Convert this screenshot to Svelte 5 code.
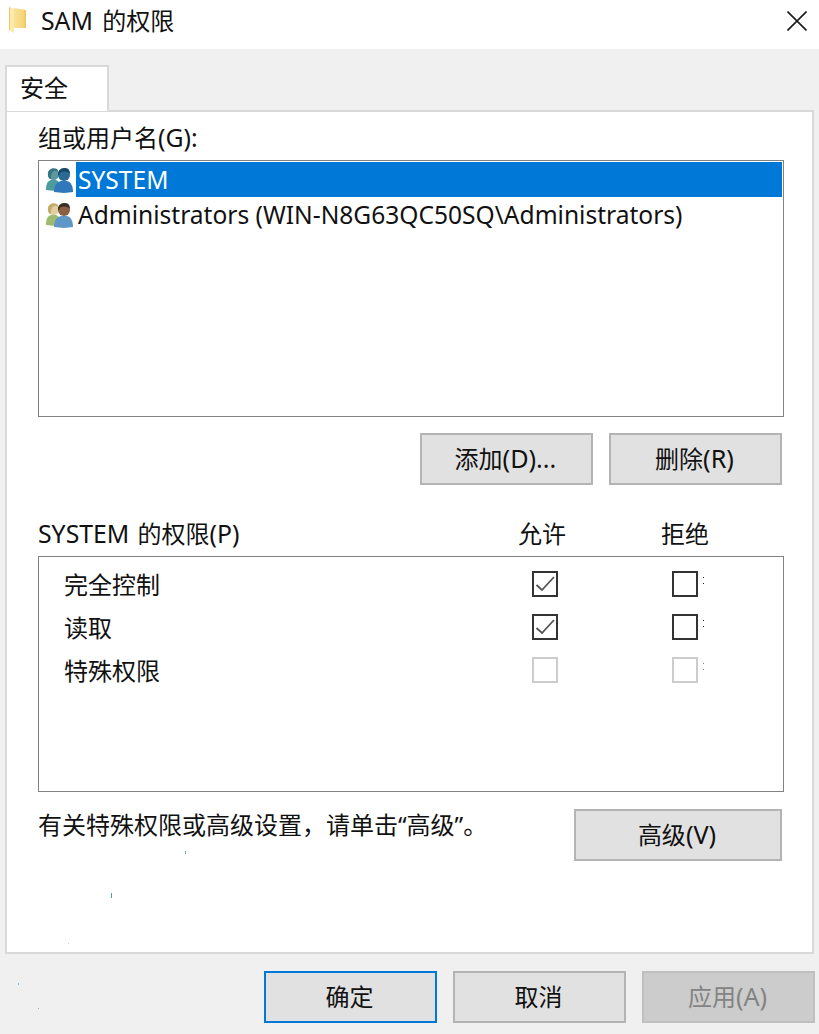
<script>
  const principals = [
    { name: 'SYSTEM', selected: true, left: '#4f9a9c', leftHead: '#5a9aa0', right: '#2f78bb', rightHead: '#2a6a94', hair: '#17466b', leftHair: '#3a7680' },
    { name: 'Administrators (WIN-N8G63QC50SQ\\Administrators)', selected: false, left: '#9dbb6e', leftHead: '#e2cfa0', right: '#5f97c8', rightHead: '#8a6044', hair: '#3a2c24', leftHair: '#c4ad6c' }
  ];

  const permissions = [
    { name: '完全控制', allow: true, disabled: false },
    { name: '读取', allow: true, disabled: false },
    { name: '特殊权限', allow: false, disabled: true }
  ];

  // stray compression specks in the capture
  const specks = [
    { x: 185, y: 851, h: 3, c: '#6f9fd0' },
    { x: 111, y: 893, h: 5, c: '#4f96d2' },
    { x: 68, y: 943, h: 1, c: '#c8d0d8' },
    { x: 18, y: 983, h: 2, c: '#6fc0e8' },
    { x: 38, y: 1008, h: 1, c: '#a8a8a8' }
  ];
</script>

<div class="dialog">
  <header class="titlebar">
    <svg class="folder" width="20" height="28" viewBox="0 0 20 28">
      <defs>
        <linearGradient id="fold" x1="0" y1="0" x2="1" y2="0">
          <stop offset="0" stop-color="#f9e196" />
          <stop offset="0.75" stop-color="#f7d67c" />
          <stop offset="1" stop-color="#eec25a" />
        </linearGradient>
      </defs>
      <path d="M6 2 L18 4 L18 22 L6 22 Z" fill="url(#fold)" />
      <path d="M1 1 L6 3 L6 27 L1 24 Z" fill="#fbe9ae" />
      <path d="M1 1 L2 1.4 L2 24.6 L1 24 Z" fill="#f0c862" />
    </svg>
    <span class="title"><span class="lat">SAM</span> 的权限</span>
    <svg class="close" width="20" height="20" viewBox="0 0 20 20">
      <path d="M0.5 0.5 L19.5 19.5 M19.5 0.5 L0.5 19.5" stroke="#1a1a1a" stroke-width="1.6" fill="none" />
    </svg>
  </header>

  <div class="body">
    <div class="tab">安全</div>

    <section class="panel">
      <div class="label">组或用户名<span class="lat">(G):</span></div>
      <ul class="list">
        {#each principals as p}
          <li class="row">
            <svg class="people" width="30" height="28" viewBox="0 0 30 28">
              <path d="M2 24 C2 17 4 15 7 14 L12 14 C15 15 17 18 17 24 L12 25 Z" fill={p.left} />
              <circle cx="9.5" cy="8.5" r="5.5" fill={p.leftHead} />
              <path d="M4 9 C3 3 9 1 13 3 C15 5 14 6 12 5 C9 5 7 6 7 13 C5 13 4 11 4 9 Z" fill={p.leftHair} />
              <path d="M10 26 C10 19 13 16 17 15 L23 15 C27 16 29 20 29 26 L20 27 Z" fill={p.right} />
              <circle cx="20" cy="9" r="6" fill={p.rightHead} />
              <path d="M14 8 C14 3 18 2 21 2 C25 2 26 5 26 8 C24 5 19 5 17 6 C15 7 15 9 15 10 Z" fill={p.hair} />
            </svg>
            <span class="row-text" class:selected={p.selected}>{p.name}</span>
          </li>
        {/each}
      </ul>

      <div class="actions">
        <button class="btn">添加<span class="lat">(D)...</span></button>
        <button class="btn">删除<span class="lat">(R)</span></button>
      </div>

      <div class="perm-head">
        <span class="perm-title"><span class="lat">SYSTEM</span> 的权限<span class="lat">(P)</span></span>
        <span class="col">允许</span>
        <span class="col">拒绝</span>
      </div>

      <div class="perm-box">
        {#each permissions as perm}
          <div class="perm-row">
            <span class="perm-name">{perm.name}</span>
            <span class="check" class:disabled={perm.disabled}>
              {#if perm.allow}
                <svg width="20" height="20" viewBox="0 0 20 20">
                  <path d="M1.5 11 L7 16 L19 3" stroke="#555" stroke-width="1.8" fill="none" />
                </svg>
              {/if}
            </span>
            <span class="check deny" class:disabled={perm.disabled}><i class="dots"></i></span>
          </div>
        {/each}
      </div>

      <div class="advanced">
        <span class="hint">有关特殊权限或高级设置，请单击“高级”。</span>
        <button class="btn wide">高级<span class="lat">(V)</span></button>
      </div>
    </section>

    <footer class="footer">
      <button class="btn primary">确定</button>
      <button class="btn">取消</button>
      <button class="btn inactive">应用<span class="lat">(A)</span></button>
    </footer>
  </div>

  {#each specks as s}
    <i class="speck" style="left: {s.x}px; top: {s.y}px; height: {s.h}px; background: {s.c}"></i>
  {/each}
</div>

<style>
  :global(body) {
    margin: 0;
    background: #f0f0f0;
  }

  .dialog {
    position: relative;
    width: 819px;
    height: 1034px;
    overflow: hidden;
    font-family: "Noto Sans", "Noto Sans CJK SC", sans-serif;
    font-size: 24px;
    color: #111;
    background: #f0f0f0;
  }

  .lat {
    font-size: 24.8px;
  }

  .titlebar {
    height: 49px;
    background: #fff;
    display: flex;
    align-items: center;
    padding: 0 12px 9px 8px;
    box-sizing: border-box;
  }

  .folder {
    margin-right: 13px;
    flex: none;
  }

  .title {
    flex: 1;
    line-height: 40px;
    word-spacing: 3px;
  }

  .close {
    flex: none;
    margin-top: 1px;
  }

  .body {
    padding: 16px 4px 0 5px;
  }

  .tab {
    width: 104px;
    height: 46px;
    box-sizing: border-box;
    background: #fff;
    border: 2px solid #d9d9d9;
    border-bottom: none;
    padding: 1px 0 0 13px;
    line-height: 40px;
    margin-bottom: -1px;
    position: relative;
    z-index: 1;
  }

  .panel {
    height: 844px;
    margin-right: 1px;
    box-sizing: border-box;
    background: #fff;
    border: 2px solid #d9d9d9;
    padding: 0 28px 0 31px;
  }

  .label {
    height: 48px;
    line-height: 50px;
  }

  .list {
    list-style: none;
    margin: 0;
    padding: 1px 1px;
    height: 257px;
    box-sizing: border-box;
    border: 1px solid #828282;
  }

  .row {
    height: 35px;
    display: flex;
    align-items: center;
    padding-left: 4px;
  }

  .people {
    flex: none;
    margin-right: 2px;
  }

  .row-text {
    height: 35px;
    font-size: 24.55px;
    line-height: 35px;
    padding: 0 2px;
    flex: none;
  }

  .row-text.selected {
    flex: 1;
    background: #0078d7;
    color: #fff;
  }

  .actions {
    display: flex;
    justify-content: flex-end;
    gap: 16px;
    margin-top: 16px;
    padding-right: 2px;
  }

  .btn {
    width: 173px;
    height: 52px;
    padding: 0 2px 3px 0;
    box-sizing: border-box;
    background: #e1e1e1;
    border: 2px solid #b4b4b4;
    font: inherit;
    color: #111;
  }

  .btn .lat {
    font-size: 25.2px;
  }

  .perm-head {
    display: flex;
    align-items: center;
    height: 48px;
    margin-top: 23px;
  }

  .perm-title {
    width: 432px;
    word-spacing: 2px;
  }

  .col {
    width: 143px;
    padding-left: 48px;
    box-sizing: border-box;
  }

  .perm-box {
    height: 236px;
    box-sizing: border-box;
    border: 1px solid #828282;
    padding-top: 5px;
  }

  .perm-row {
    height: 43px;
    display: flex;
    align-items: center;
    position: relative;
  }

  .perm-name {
    width: 493px;
    padding-left: 25px;
    box-sizing: border-box;
  }

  .check {
    width: 26px;
    height: 26px;
    box-sizing: border-box;
    border: 2px solid #333;
    background: #fff;
    position: relative;
    flex: none;
  }

  .check.deny {
    margin-left: 114px;
  }

  .check.disabled {
    border-color: #ccc;
  }

  .check svg {
    display: block;
    margin: 1px;
    overflow: visible;
  }

  .dots {
    position: absolute;
    left: 29px;
    top: 4px;
    width: 1px;
    height: 7px;
    border-top: 1px solid #222;
    border-bottom: 1px solid #222;
    box-sizing: border-box;
  }

  .check.disabled .dots {
    border-color: #888;
  }

  .advanced {
    display: flex;
    justify-content: space-between;
    margin-top: 17px;
    padding-right: 2px;
  }

  .hint {
    line-height: 32px;
  }

  .btn.wide {
    width: 208px;
  }

  .footer {
    display: flex;
    justify-content: flex-end;
    gap: 16px;
    margin-top: 17px;
  }

  .btn.primary {
    border-color: #0078d7;
  }

  .btn.inactive {
    background: #cccccc;
    border-color: #bfbfbf;
    color: #838383;
  }

  .speck {
    position: absolute;
    width: 1px;
  }
</style>
